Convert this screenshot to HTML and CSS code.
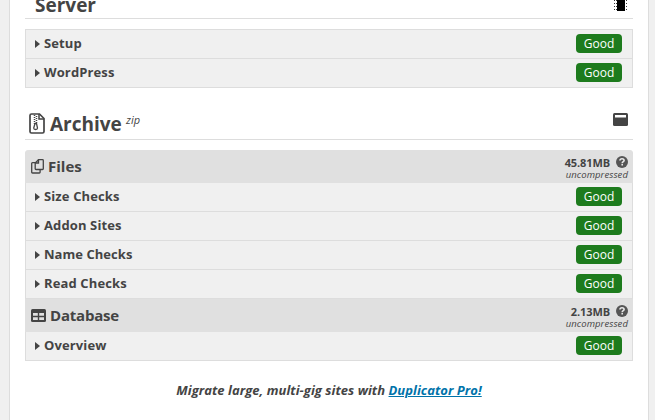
FILE: index.html
```html
<!DOCTYPE html>
<html lang="en">
<head>
<meta charset="utf-8">
<title>Scan results</title>
<link rel="stylesheet" href="styles.css">
</head>
<body>
<main class="panel">
  <header class="title title-server"><span class="t-server">Server</span>
    <svg class="chip" width="16" height="16" viewBox="0 0 16 16"><path d="M1 3.500h14M1 6.500h14M1 9.500h14M1 12.500h14" stroke="#333" stroke-width="1" stroke-dasharray="1 1"/><path d="M4 0h8v14H4z"/></svg>
  </header>
  <section class="box">
    <div class="row"><i class="caret"></i><b>Setup</b><span class="badge">Good</span></div>
    <div class="row"><i class="caret"></i><b class="wordpress">WordPress</b><span class="badge">Good</span></div>
  </section>
  <header class="title title-archive">
    <svg class="zip" width="16" height="21" viewBox="0 0 16 21" fill="none" stroke="#444"><path d="M2.500 1h8L15 5.500V18.500q0 1.500-1.500 1.500h-11Q1 20 1 18.500V2.500Q1 1 2.500 1z" stroke-width="1.700"/><path d="M10 1v5h5" stroke-width="1.500"/><path d="M5.500 2v9M7.500 3v8" stroke-width="1.500" stroke-dasharray="1 1"/><path d="M6 10.500h1.500l1 4.500q0 1.500-1.900 1.500T4.700 15z" stroke-width="1.300"/></svg>
    <span class="t-archive">Archive</span><em class="format">zip</em>
    <svg class="window" width="15" height="13" viewBox="0 0 15 13"><rect width="15" height="13" rx="1.500" fill="#444"/><path d="M2 2h11v2.500H2z" fill="#fff"/></svg>
  </header>
  <section class="box box-archive">
    <div class="group">
      <svg class="copy" width="13" height="15" viewBox="0 0 13 15" fill="none" stroke="#444" stroke-width="1.300"><path d="M7.500.7h4q.8 0 .8.800v8.200q0 .8-.8.800H5q-.8 0-.8-.8V4z"/><path d="M7.500.7V4H4.200M4 3.700H1.500q-.8 0-.8.800v8.700q0 .8.800.800h6.800q.8 0 .8-.8v-2.500"/></svg>
      <span class="t-files">Files</span>
      <div class="size"><div class="amount"><b>45.81MB</b><svg width="12" height="12" viewBox="0 0 12 12"><circle cx="6" cy="6" r="6" fill="#555"/><path d="M3.900 4.500C4 3.200 4.800 2.700 6 2.700c1.300 0 2.100.700 2.100 1.700C8.100 5.700 6.200 5.600 6.200 7.200M6.200 8v1.600" fill="none" stroke="#e8e8e8" stroke-width="1.600"/></svg></div><em>uncompressed</em></div>
    </div>
    <div class="row"><i class="caret"></i><b>Size Checks</b><span class="badge">Good</span></div>
    <div class="row"><i class="caret"></i><b>Addon Sites</b><span class="badge">Good</span></div>
    <div class="row"><i class="caret"></i><b class="name">Name Checks</b><span class="badge">Good</span></div>
    <div class="row"><i class="caret"></i><b>Read Checks</b><span class="badge">Good</span></div>
    <div class="group group-db">
      <svg class="table" width="15" height="13" viewBox="0 0 15 13"><rect width="15" height="13" rx="1.500" fill="#444"/><path d="M2 4h4.800v2.800H2zM8.200 4H13v2.800H8.200zM2 8.200h4.800V11H2zM8.200 8.200H13V11H8.200z" fill="#e0e0e0"/></svg>
      <span class="t-db">Database</span>
      <div class="size"><div class="amount"><b>2.13MB</b><svg width="12" height="12" viewBox="0 0 12 12"><circle cx="6" cy="6" r="6" fill="#555"/><path d="M3.900 4.500C4 3.200 4.800 2.700 6 2.700c1.300 0 2.100.700 2.100 1.700C8.100 5.700 6.200 5.600 6.200 7.200M6.200 8v1.600" fill="none" stroke="#e8e8e8" stroke-width="1.600"/></svg></div><em>uncompressed</em></div>
    </div>
    <div class="row"><i class="caret"></i><b>Overview</b><span class="badge">Good</span></div>
  </section>
  <p class="promo">Migrate large, multi-gig sites with <a href="#">Duplicator Pro!</a></p>
</main>
</body>
</html>
```
FILE: styles.css
```css
* { box-sizing: border-box; }
body {
  margin: 0;
  height: 420px;
  overflow: hidden;
  background: #f0f0f0;
  color: #444;
  font: 13px/18px "Open Sans", sans-serif;
}
svg { display: block; flex: none; }
.panel {
  width: 640px;
  height: 420px;
  margin-left: 9px;
  padding: 0 15px;
  background: #fff;
  border: solid #ddd;
  border-width: 0 1px;
}
.title {
  display: flex;
  border-bottom: 1px solid #ddd;
  font-size: 19px;
  font-weight: 700;
  line-height: 26px;
}
.title-server { height: 19px; padding: 0 4px 0 10px; }
.t-server { margin-top: -8px; }
.chip { margin: -3px 0 0 auto; }
.title-archive { height: 34px; margin-top: 18px; padding: 0 5px 0 4px; }
.zip { margin-top: 7px; }
.t-archive { width: 71px; margin: 5px 0 0 5px; }
.format { margin: 5px 0 0 5px; font-size: 11px; font-weight: 400; line-height: 18px; }
.window { margin: 7px 0 0 auto; }
.box {
  margin-top: 10px;
  background: #f0f0f0;
  border: 1px solid #ddd;
}
.box-archive { border-top: 0; border-radius: 4px 4px 0 0; }
.row {
  display: flex;
  align-items: center;
  height: 29px;
  padding: 0 10px 1px 9px;
  border-bottom: 1px solid #ddd;
}
.row:last-child { height: 28px; border-bottom: 0; }
.caret {
  margin-right: 4px;
  border: solid transparent;
  border-width: 4px 0 4px 5px;
  border-left-color: #444;
}
.row b { padding-bottom: 2px; font-size: 13px; font-weight: 700; letter-spacing: .12px; }
.row .name { letter-spacing: .04px; }
.badge {
  width: 46px;
  height: 19px;
  margin-left: auto;
  background: #1d7b1d;
  border-radius: 4px;
  color: #fff;
  font-size: 12px;
  line-height: 19px;
  text-align: center;
}
.group {
  display: flex;
  align-items: center;
  height: 33px;
  margin: 0 -1px;
  padding: 0 5px 0 6px;
  background: #e0e0e0;
  border-radius: 4px 4px 0 0;
  font-size: 15px;
  font-weight: 700;
}
.group-db { border-radius: 0; }
.group > span { padding-bottom: 2px; }
.t-files { margin-left: 4px; }
.t-db { margin-left: 4px; letter-spacing: -.2px; }
.table { margin-bottom: 1px; }
.size { margin: 2px 0 0 auto; text-align: right; }
.amount { display: flex; justify-content: flex-end; align-items: center; gap: 6px; height: 13px; font-size: 11px; line-height: 13px; }
.amount b { font-weight: 700; letter-spacing: -.1px; }
.size em { display: block; height: 11px; font-size: 9.500px; font-weight: 400; line-height: 11px; letter-spacing: .08px; }
.promo { margin: 20px 0 0; font-size: 13px; font-style: italic; font-weight: 700; line-height: 18px; letter-spacing: .04px; text-align: center; }
.promo a { color: #0073aa; }
```
